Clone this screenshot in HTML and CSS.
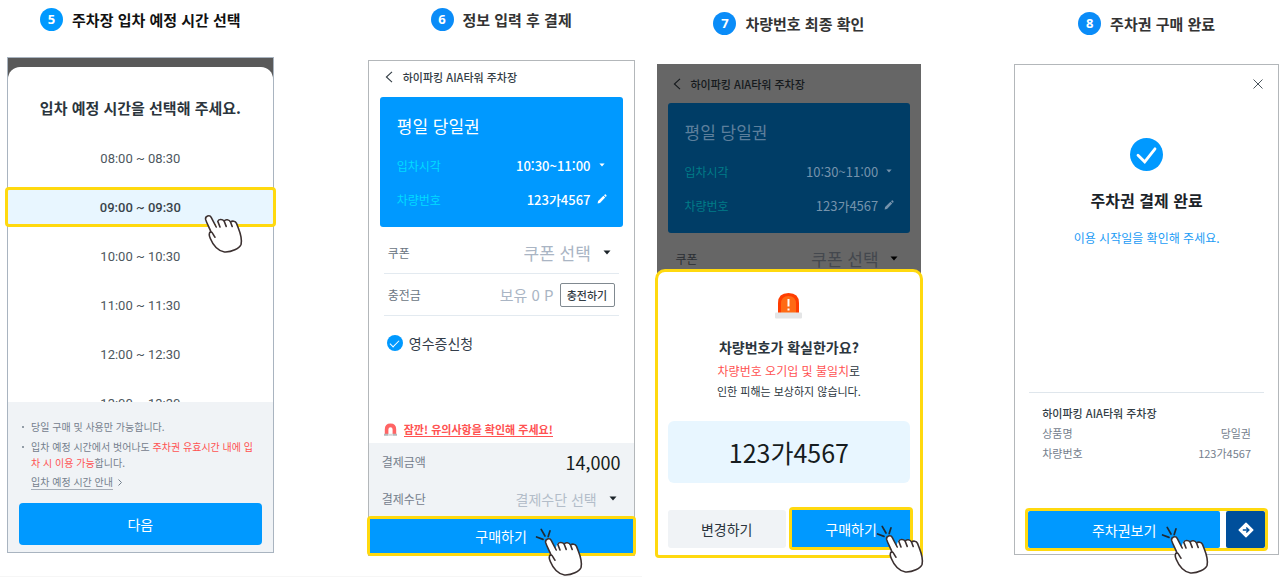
FILE: index.html
```html
<!DOCTYPE html>
<html lang="ko">
<head>
  <meta charset="utf-8">
  <meta name="viewport" content="width=device-width, initial-scale=1">
  <title>주차권 구매 안내</title>
  <link rel="stylesheet" href="styles.css">
</head>
<body>

  <!-- shared icons -->
  <svg class="sprite" aria-hidden="true">
    <symbol id="hand" viewBox="-3 -2 50 50">
      <path d="M17.6 20.5 L13.2 11.3 C11.8 8.6 7 9.9 7.6 13.4 C8.4 16.6 10.8 21 12.6 25.4 C10.8 26.4 10.9 29.6 12.2 32.2 C14.6 38 18.4 44.6 26.5 46 C33.5 46.4 41.6 42.4 43.1 38.2 C44 34 42.9 28.5 40.4 22.2 L38.5 17.4 C37.4 14.8 34 14.6 32.6 16.2 C31.2 13.2 27.4 13 26.2 15.2 C24.4 12.8 20.8 12.8 19.4 14.8 C18.4 16.4 17.8 18.4 17.6 20.5 Z" fill="#fff"/>
      <path d="M18.2 21 L13.2 11.3 C11.8 8.6 7 9.9 7.6 13.4 C8.6 17 11.4 21.4 12.8 25.6 C10.8 26.4 10.9 29.6 12.2 32.2 C14.6 38 18.4 44.6 26.5 46 C33.5 46.4 41.6 42.4 43.1 38.2 C44 34 42.9 28.5 40.4 22.2 L38.5 17.4 C37.4 14.8 34 14.6 32.6 16.2 L34.2 20.5 M32.6 16.2 C31.2 13.2 27.4 13 26.2 15.2 L28.2 20.4 M26.2 15.2 C24.4 12.8 20.4 13 19.8 15.4 L22 21 M12.8 25.6 C14.8 26.4 15.2 29 17 31.2" fill="none" stroke="#3b3030" stroke-width="1.6" stroke-linecap="round" stroke-linejoin="round"/>
    </symbol>
    <symbol id="spark" viewBox="-3 -2 50 50">
      <path d="M-1.4 8 L5 10.4 M3.2 .4 L7 7 M12 1.8 L10.2 7.6" fill="none" stroke="#1f2a33" stroke-width="1.7" stroke-linecap="round"/>
    </symbol>
    <symbol id="caret" viewBox="0 0 8 5">
      <path d="M.5 .5 H7.5 L4 4.5 Z" fill="currentColor"/>
    </symbol>
    <symbol id="back" viewBox="0 0 8 12">
      <path d="M7 .8 L1.4 6 L7 11.2" fill="none" stroke="currentColor" stroke-width="1.1"/>
    </symbol>
    <symbol id="pencil" viewBox="0 0 10 10">
      <path d="M.6 9.4 L1.1 7 L6.4 1.8 L8.2 3.6 L3 8.9 Z M7 1.2 L7.8 .5 Q8.3 .2 8.8 .6 L9.4 1.2 Q9.8 1.7 9.4 2.2 L8.8 3 Z" fill="currentColor"/>
    </symbol>
  </svg>

  <main class="guide">

    <!-- step 5 -->
    <section class="step step-time">
      <h2 class="step-title"><span class="badge">5</span>주차장 입차 예정 시간 선택</h2>
      <div class="phone phone-time">
        <div class="time-sheet">
          <h3 class="time-title">입차 예정 시간을 선택해 주세요.</h3>
          <ul class="time-list">
            <li><button type="button">08:00 ~ 08:30</button></li>
            <li class="selected">
              <button type="button">09:00 ~ 09:30</button>
              <svg class="hand" aria-hidden="true"><use href="#hand"/></svg>
            </li>
            <li><button type="button">10:00 ~ 10:30</button></li>
            <li><button type="button">11:00 ~ 11:30</button></li>
            <li><button type="button">12:00 ~ 12:30</button></li>
            <li><button type="button">13:00 ~ 13:30</button></li>
          </ul>
          <div class="notes">
            <ul class="note-list">
              <li>당일 구매 및 사용만 가능합니다.</li>
              <li>입차 예정 시간에서 벗어나도 <em>주차권 유효시간 내에 입<br>차 시 이용 가능</em>합니다.</li>
            </ul>
            <a class="note-link" href="#"><span>입차 예정 시간 안내</span>
              <svg width="4" height="7" viewBox="0 0 4 7" aria-hidden="true"><path d="M.5 .5 L3.5 3.5 L.5 6.5" fill="none" stroke="currentColor"/></svg>
            </a>
            <button type="button" class="btn btn-next">다음</button>
          </div>
        </div>
      </div>
    </section>

    <!-- step 6 -->
    <section class="step step-pay">
      <h2 class="step-title"><span class="badge">6</span>정보 입력 후 결제</h2>
      <div class="phone phone-pay">
        <div class="topbar">
          <svg width="8" height="12" aria-hidden="true"><use href="#back"/></svg>
          <span>하이파킹 AIA타워 주차장</span>
        </div>
        <div class="ticket">
          <h3>평일 당일권</h3>
          <div class="ticket-row">
            <label for="enterTime">입차시각</label>
            <div class="value">
              <select id="enterTime"><option>10:30~11:00</option></select>
              <svg class="caret-small" aria-hidden="true"><use href="#caret"/></svg>
            </div>
          </div>
          <div class="ticket-row">
            <span>차량번호</span>
            <button type="button" class="value">123가4567 <svg width="10" height="10" aria-hidden="true"><use href="#pencil"/></svg></button>
          </div>
        </div>
        <div class="fields">
          <div class="field">
            <label for="coupon">쿠폰</label>
            <div class="value">
              <select id="coupon" class="coupon"><option>쿠폰 선택</option></select>
              <svg class="caret" aria-hidden="true"><use href="#caret"/></svg>
            </div>
          </div>
          <div class="field field-charge">
            <span>충전금</span>
            <div class="value">
              <span class="point">보유 0 P</span>
              <button type="button" class="btn-charge">충전하기</button>
            </div>
          </div>
        </div>
        <label class="receipt"><input type="checkbox" checked>영수증신청</label>
        <a class="caution" href="#">
          <svg width="13" height="13" viewBox="0 0 13 13" aria-hidden="true">
            <path d="M.8 11 V6.200 Q.8 .6 6.500 .6 Q12.200 .6 12.200 6.200 V11 H8.600 V6.500 Q8.600 4.300 6.500 4.300 Q4.400 4.300 4.400 6.500 V11 Z" fill="#ff6464"/>
            <path d="M0 10.800 H4.400 V12.800 H0 Z M8.600 10.800 H13 V12.800 H8.600 Z" fill="#b4b7ba"/>
            <path d="M4.400 10.800 H8.600 V12.800 H4.400 Z" fill="#d5d8da"/>
          </svg>
          <span>잠깐! 유의사항을 확인해 주세요!</span>
        </a>
        <div class="summary">
          <div class="summary-row">
            <span>결제금액</span>
            <strong>14,000</strong>
          </div>
          <div class="summary-row">
            <label for="method">결제수단</label>
            <div class="value">
              <select id="method"><option>결제수단 선택</option></select>
              <svg class="caret" aria-hidden="true"><use href="#caret"/></svg>
            </div>
          </div>
        </div>
        <div class="highlight highlight-pay">
          <button type="button" class="btn">구매하기</button>
          <svg class="hand" aria-hidden="true"><use href="#spark"/><use href="#hand"/></svg>
        </div>
      </div>
    </section>

    <!-- step 7 -->
    <section class="step step-confirm">
      <h2 class="step-title"><span class="badge">7</span>차량번호 최종 확인</h2>
      <div class="phone-confirm">
        <div class="dimmed">
          <div class="topbar">
            <svg width="8" height="12" aria-hidden="true"><use href="#back"/></svg>
            <span>하이파킹 AIA타워 주차장</span>
          </div>
          <div class="ticket">
            <h3>평일 당일권</h3>
            <div class="ticket-row">
              <label for="enterTime2">입차시각</label>
              <div class="value">
                <select id="enterTime2"><option>10:30~11:00</option></select>
                <svg class="caret-small" aria-hidden="true"><use href="#caret"/></svg>
              </div>
            </div>
            <div class="ticket-row">
              <span>차량번호</span>
              <button type="button" class="value">123가4567 <svg width="10" height="10" aria-hidden="true"><use href="#pencil"/></svg></button>
            </div>
          </div>
          <div class="fields">
            <div class="field">
              <label for="coupon2">쿠폰</label>
              <div class="value">
                <select id="coupon2" class="coupon"><option>쿠폰 선택</option></select>
                <svg class="caret" aria-hidden="true"><use href="#caret"/></svg>
              </div>
            </div>
          </div>
        </div>
        <div class="confirm-sheet">
          <svg class="siren" width="27" height="27" viewBox="0 0 27 27" aria-hidden="true">
            <path d="M3 21 V11 Q3 1 13.500 1 Q24 1 24 11 V21 Z" fill="#ff3d00"/>
            <path d="M6 21 V12 Q6 4 13.500 4 Q21 4 21 12 V21 Z" fill="#ff6a13"/>
            <path d="M13.500 7 V14.500 M13.500 16.500 V18.500" stroke="#fff" stroke-width="2"/>
            <rect x="0" y="20.500" width="27" height="6" rx="1" fill="#e4e5e6"/>
          </svg>
          <h3>차량번호가 확실한가요?</h3>
          <p class="warn"><em>차량번호 오기입 및 불일치</em>로</p>
          <p class="warn-sub">인한 피해는 보상하지 않습니다.</p>
          <div class="plate">123가4567</div>
          <div class="confirm-actions">
            <button type="button" class="btn btn-gray">변경하기</button>
            <div class="highlight highlight-buy">
              <button type="button" class="btn">구매하기</button>
              <svg class="hand" aria-hidden="true"><use href="#spark"/><use href="#hand"/></svg>
            </div>
          </div>
        </div>
      </div>
    </section>

    <!-- step 8 -->
    <section class="step step-done">
      <h2 class="step-title"><span class="badge">8</span>주차권 구매 완료</h2>
      <div class="phone phone-done">
        <button type="button" class="close" aria-label="닫기">
          <svg width="12" height="12" viewBox="0 0 12 12" aria-hidden="true"><path d="M1.500 1.500 L10.500 10.500 M10.500 1.500 L1.500 10.500" stroke="#4b555d" fill="none"/></svg>
        </button>
        <svg class="done-icon" width="33" height="33" viewBox="0 0 33 33" aria-hidden="true">
          <circle cx="16.500" cy="16.500" r="16.500" fill="#0099ff"/>
          <path d="M8 17.300 L14.700 23.800 L25 10.800" fill="none" stroke="#fff" stroke-width="2.800" stroke-linecap="round"/>
        </svg>
        <h3>주차권 결제 완료</h3>
        <p class="done-sub">이용 시작일을 확인해 주세요.</p>
        <div class="order">
          <h4>하이파킹 AIA타워 주차장</h4>
          <dl>
            <div><dt>상품명</dt><dd>당일권</dd></div>
            <div><dt>차량번호</dt><dd>123가4567</dd></div>
          </dl>
        </div>
        <div class="highlight highlight-view">
          <button type="button" class="btn btn-view">주차권보기</button>
          <button type="button" class="btn btn-route" aria-label="길찾기">
            <svg width="16" height="16" viewBox="0 0 16 16" aria-hidden="true">
              <path d="M8 1.200 L14.800 8 L8 14.800 L1.200 8 Z" fill="#fff" stroke="#fff" stroke-width="1.500" stroke-linejoin="round"/>
              <path d="M4.800 8 H10 M8.300 5.500 L10.800 8 L8.300 10.500" fill="none" stroke="#004f9b" stroke-width="1.500"/>
            </svg>
          </button>
          <svg class="hand" aria-hidden="true"><use href="#spark"/><use href="#hand"/></svg>
        </div>
      </div>
    </section>

  </main>
  <hr class="page-line">

</body>
</html>
```
FILE: styles.css
```css
* {
  box-sizing: border-box;
}

body {
  margin: 0;
  background: #fff;
  color: #2b353d;
  font-family: "Noto Sans CJK KR", sans-serif;
  font-size: 12px;
}

h2, h3, h4, p, ul, dl, dd {
  margin: 0;
  padding: 0;
}

ul {
  list-style: none;
}

em {
  font-style: normal;
  color: #ff5252;
}

button, select, input {
  margin: 0;
  padding: 0;
  border: none;
  background: none;
  color: inherit;
  font: inherit;
}

button {
  cursor: pointer;
}

select {
  appearance: none;
  text-align-last: right;
}

svg {
  flex-shrink: 0;
}

.sprite {
  position: absolute;
  width: 0;
  height: 0;
}

.guide {
  display: flex;
  align-items: flex-start;
  padding: 0 4px 0 7px;
}

/* steps */
.step {
  flex: 265;
  min-width: 0;
  padding-top: 8px;
}

.step-time, .step-pay {
  flex: 267;
}

.step-pay {
  margin-left: 94px;
}

.step-confirm {
  margin-left: 22px;
}

.step-done {
  margin-left: 93px;
}

.step-confirm, .step-done {
  padding-top: 12px;
}

.step-title {
  display: flex;
  align-items: center;
  justify-content: center;
  gap: 9px;
  height: 23px;
  margin-bottom: 29px;
  color: #333;
  font-size: 15px;
  font-weight: 700;
  white-space: nowrap;
}

.step-time .step-title {
  margin-bottom: 26px;
  color: #111;
}

.badge {
  width: 23px;
  height: 23px;
  border-radius: 50%;
  background: #0a8cf8;
  color: #fff;
  font-family: "Open Sans", sans-serif;
  font-size: 13px;
  font-weight: 700;
  line-height: 23px;
  text-align: center;
}

.step-time .badge {
  background: #0099ff;
}

.phone {
  border: 1px solid #b3b7ba;
}

.btn {
  background: #0099ff;
  color: #fff;
  font-size: 14px;
}

.highlight {
  position: relative;
  display: flex;
  border: 3px solid #ffd90f;
  border-radius: 4px;
}

.highlight .btn {
  flex: 1;
}

.hand {
  position: absolute;
  top: 14px;
  right: 28px;
  width: 50px;
  height: 50px;
  z-index: 2;
  pointer-events: none;
}

/* time selection */
.phone-time {
  padding-top: 9px;
  border-color: #a9b4c0;
  background: #595959;
}

.time-sheet {
  padding-top: 29px;
  border-radius: 12px 12px 0 0;
  background: #fff;
}

.time-title {
  margin-bottom: 14px;
  font-size: 15px;
  font-weight: 700;
  line-height: 24px;
  text-align: center;
}

.time-list li {
  display: flex;
  align-items: center;
  height: 49px;
}

.time-list button {
  flex: 1;
  height: 34px;
  color: #4d575e;
  font-family: Roboto, sans-serif;
  font-size: 13px;
}

.time-list .selected {
  position: relative;
  height: 40px;
  margin: 4px -3px 5px;
  border: 3px solid #ffd90f;
  border-radius: 4px;
  background: #e8f6ff;
}

.time-list .selected button {
  color: #3a444b;
  font-weight: 500;
}

.notes {
  position: relative;
  margin-top: -26px;
  padding: 17px 11px 7px;
  background: #f0f3f6;
  color: #75808d;
  font-size: 10px;
  line-height: 16px;
}

.note-list li {
  position: relative;
  margin-bottom: 4px;
  padding-left: 12px;
  white-space: nowrap;
}

.note-list li::before {
  content: "";
  position: absolute;
  top: 7px;
  left: 3px;
  width: 2px;
  height: 2px;
  border-radius: 50%;
  background: #75808d;
}

.note-link {
  display: flex;
  align-items: center;
  gap: 5px;
  padding-left: 12px;
  color: inherit;
  text-decoration: none;
}

.note-link span {
  border-bottom: 1px solid #a5adb7;
  line-height: 14px;
}

.btn-next {
  width: 100%;
  height: 42px;
  margin-top: 13px;
  border-radius: 4px;
}

/* payment form */
.topbar {
  display: flex;
  align-items: center;
  gap: 10px;
  height: 36px;
  padding: 0 16px 4px;
  color: #333d45;
  font-size: 11px;
  font-weight: 500;
}

.ticket {
  margin: 0 11px;
  padding: 16px 16px 11px 17px;
  border-radius: 3px;
  background: #0099ff;
  color: #fff;
}

.ticket h3 {
  margin-bottom: 9px;
  font-size: 17px;
  font-weight: 400;
  line-height: 26px;
}

.ticket-row {
  display: flex;
  align-items: center;
  justify-content: space-between;
  height: 34px;
  color: #00dcff;
}

.value {
  display: flex;
  align-items: center;
  gap: 6px;
}

.ticket-row .value {
  color: #fff;
  font-size: 13px;
  font-weight: 500;
}

.caret {
  width: 8px;
  height: 5px;
  margin-left: 6px;
  color: #1b2329;
}

.caret-small {
  width: 6px;
  height: 4px;
  margin: 0 2px;
}

.fields {
  margin: 5px 15px 0;
}

.field {
  display: flex;
  align-items: center;
  justify-content: space-between;
  height: 42px;
  padding: 0 8px 0 4px;
  border-bottom: 1px solid #e3eaf0;
  color: #6b7683;
}

.field-charge {
  padding-right: 4px;
}

.coupon {
  color: #aab5c4;
  font-size: 17px;
}

.point {
  color: #aab5c4;
  font-size: 15px;
}

.btn-charge {
  width: 55px;
  height: 24px;
  border: 1px solid #808990;
  border-radius: 2px;
  color: #333d45;
  font-size: 11px;
  font-weight: 500;
}

.receipt {
  display: flex;
  align-items: center;
  gap: 6px;
  height: 24px;
  margin: 15px 18px 0;
  color: #333d4a;
  font-size: 14px;
}

.receipt input {
  appearance: none;
  display: flex;
  justify-content: center;
  width: 16px;
  height: 16px;
  border-radius: 50%;
  background: #0099ff;
}

.receipt input:checked::after {
  content: "";
  width: 8px;
  height: 4px;
  margin-top: 5px;
  border: solid #fff;
  border-width: 0 0 1px 1px;
  transform: rotate(-45deg);
}

.caution {
  display: flex;
  align-items: center;
  gap: 7px;
  height: 18px;
  margin: 65px 15px 5px;
  color: #ff5252;
  font-size: 11px;
  font-weight: 700;
  text-decoration: none;
}

.caution span {
  border-bottom: 1px solid #ff5252;
  line-height: 14px;
}

.summary {
  padding: 0 13px;
  background: #f0f3f6;
  color: #75808d;
}

.summary-row {
  display: flex;
  align-items: center;
  justify-content: space-between;
  height: 37px;
}

.summary-row strong {
  color: #161c20;
  font-size: 18px;
  font-weight: 400;
}

.summary-row .value {
  padding-right: 4px;
  color: #b3bdc9;
  font-size: 14px;
}

.highlight-pay {
  height: 40px;
  margin: -1px -2px;
}

.highlight-pay .hand {
  top: 8px;
  right: 48px;
}

/* final check */
.dimmed {
  background: #666;
}

.dimmed .topbar {
  height: 39px;
  padding-bottom: 0;
  color: #15191c;
}

.dimmed .ticket {
  background: #003d66;
  color: #5d7f9c;
}

.dimmed .ticket-row {
  color: #007c88;
}

.dimmed .ticket-row .value {
  color: #7593ac;
  font-weight: 400;
}

.dimmed .fields {
  padding-top: 5px;
  margin-top: 0;
}

.dimmed .field {
  border-color: #5b5e60;
  color: #2b2f34;
}

.dimmed .coupon {
  color: #44484e;
}

.dimmed .caret {
  color: #000;
}

.confirm-sheet {
  position: relative;
  margin: -11px -2px 0;
  padding: 20px 10px 5px;
  border: 3px solid #ffd90f;
  border-radius: 10px 10px 4px 4px;
  background: #fff;
  text-align: center;
}

.siren {
  display: block;
  margin: 0 auto 16px;
}

.confirm-sheet h3 {
  font-size: 14px;
  font-weight: 700;
  line-height: 24px;
}

.warn {
  font-size: 12px;
  line-height: 24px;
}

.warn-sub {
  font-size: 11px;
  line-height: 16px;
}

.plate {
  margin: 22px 0 24px;
  border-radius: 6px;
  background: #e8f6ff;
  color: #161c20;
  font-size: 25px;
  line-height: 62px;
}

.confirm-actions {
  display: flex;
  align-items: center;
  gap: 3px;
}

.btn-gray {
  flex: 1;
  height: 38px;
  border-radius: 3px;
  background: #f0f3f6;
  color: #2b353d;
}

.highlight-buy {
  flex: 1;
  height: 43px;
  margin-right: -3px;
}

.highlight-buy .hand {
  right: -16px;
}

/* purchase done */
.phone-done {
  display: flex;
  flex-direction: column;
  align-items: center;
  padding: 13px 10px 3px;
}

.close {
  align-self: flex-end;
  width: 20px;
  height: 12px;
  line-height: 0;
}

.done-icon {
  margin: 48px 0 16px;
}

.phone-done h3 {
  color: #1b2329;
  font-size: 16px;
  font-weight: 700;
  line-height: 26px;
}

.done-sub {
  margin: 16px 0 145px;
  color: #1a9bf5;
  line-height: 18px;
}

.order {
  align-self: stretch;
  margin: 0 4px 45px;
  padding: 10px 13px 0;
  border-top: 1px solid #dfe6ec;
  color: #75808d;
  font-size: 11px;
  line-height: 20px;
}

.order h4 {
  color: #333d45;
  font-size: 11px;
  font-weight: 500;
}

.order dl div {
  display: flex;
  justify-content: space-between;
}

.highlight-view {
  align-self: stretch;
  gap: 6px;
  height: 43px;
}

.highlight-view .btn {
  border-radius: 2px;
}

.highlight-view .btn-route {
  flex: 0 0 39px;
  background: #004f9b;
  line-height: 0;
}

.highlight-view .hand {
  right: 54px;
}

.page-line {
  width: 50%;
  margin: 18px 0 0;
  border: none;
  border-top: 1px solid #f6f6f6;
}
```
